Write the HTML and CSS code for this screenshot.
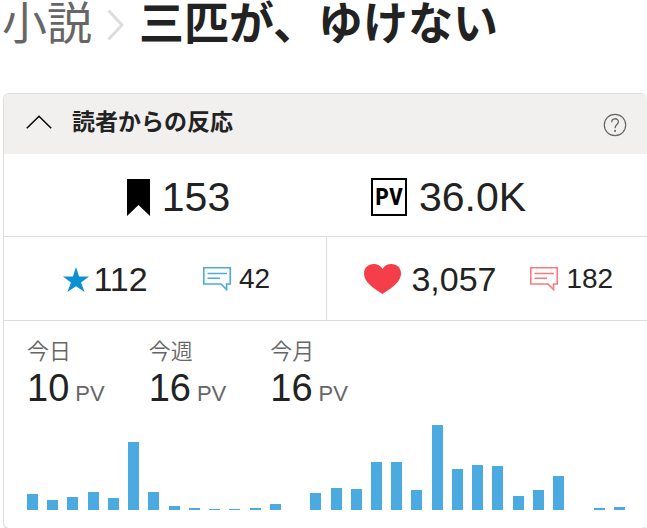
FILE: index.html
```html
<!DOCTYPE html>
<html lang="ja">
<head>
    <meta charset="UTF-8">
    <meta name="viewport" content="width=device-width, initial-scale=1.0">
    <title>三匹が、ゆけない</title>
    <link rel="stylesheet" href="styles.css">
</head>
<body>
    <header class="breadcrumb">
        <a class="breadcrumb-link" href="#">小説</a>
        <svg class="breadcrumb-arrow" width="17" height="32" viewBox="0 0 17 32" aria-hidden="true">
            <path d="M1.5 1.5 L15 16 L1.5 30.5" fill="none" stroke="#ddd" stroke-width="3"/>
        </svg>
        <h1 class="breadcrumb-title">三匹が、ゆけない</h1>
    </header>

    <section class="card">
        <div class="card-header">
            <button class="toggle" type="button" aria-expanded="true">
                <svg width="26" height="14" viewBox="0 0 26 14" aria-hidden="true">
                    <path d="M0.8 13.2 L13 1.2 L25.2 13.2" fill="none" stroke="#000" stroke-width="1.5"/>
                </svg>
                <span>読者からの反応</span>
            </button>
            <button class="help" type="button" aria-label="ヘルプ">
                <svg width="24" height="24" viewBox="0 0 24 24" aria-hidden="true">
                    <circle cx="12" cy="12" r="10.7" fill="none" stroke="#666" stroke-width="1.2"/>
                    <path d="M8.7 9.2 C8.7 4.7 15.4 4.7 15.4 8.8 C15.4 11.6 12.1 11.6 12.1 15.2" fill="none" stroke="#666" stroke-width="1.3"/>
                    <rect x="11.2" y="17" width="1.8" height="1.8" fill="#666"/>
                </svg>
            </button>
        </div>

        <div class="totals">
            <div class="stat stat-large">
                <svg width="23" height="37" viewBox="0 0 23 37" aria-hidden="true">
                    <path d="M0 0 H23 V37 L11.5 26 L0 37 Z" fill="#000"/>
                </svg>
                <span>153</span>
            </div>
            <div class="stat stat-large">
                <span class="pv-icon">PV</span>
                <span>36.0K</span>
            </div>
        </div>

        <div class="reactions">
            <div class="reaction">
                <div class="stat stat-medium stat-star">
                    <svg width="26" height="25" viewBox="0 0 26 25" aria-hidden="true">
                        <path d="M13 0 L16.1 9.5 H26 L18 15.4 L21.6 25 L13 19.3 L4.4 25 L8 15.4 L0 9.5 H9.9 Z" fill="#0b90d1"/>
                    </svg>
                    <span>112</span>
                </div>
                <div class="stat stat-small">
                    <svg width="28" height="24" viewBox="0 0 28 24" fill="none" stroke="#4baae0" stroke-width="1.6" aria-hidden="true">
                        <path d="M0.8 0.8 H27.2 V17 H23.6 V22.6 L18 17 H0.8 Z"/>
                        <path d="M4.5 6.5 H24 M4.5 11.2 H17"/>
                    </svg>
                    <span>42</span>
                </div>
            </div>
            <div class="reaction">
                <div class="stat stat-medium">
                    <svg width="37" height="30" viewBox="0 0 37 30" aria-hidden="true">
                        <path d="M18.5 30 C13 26 0 19.5 0 9.5 C0 3.5 4.5 0 9.5 0 C13.5 0 16.8 1.7 18.5 5 C20.2 1.7 23.5 0 27.5 0 C32.5 0 37 3.5 37 9.5 C37 19.5 24 26 18.5 30 Z" fill="#f43f4b"/>
                    </svg>
                    <span>3,057</span>
                </div>
                <div class="stat stat-small">
                    <svg width="28" height="24" viewBox="0 0 28 24" fill="none" stroke="#f87b80" stroke-width="1.6" aria-hidden="true">
                        <path d="M0.8 0.8 H27.2 V17 H23.6 V22.6 L18 17 H0.8 Z"/>
                        <path d="M4.5 6.5 H24 M4.5 11.2 H17"/>
                    </svg>
                    <span>182</span>
                </div>
            </div>
        </div>

        <div class="access">
            <dl class="periods">
                <div>
                    <dt>今日</dt>
                    <dd><span>10</span><small>PV</small></dd>
                </div>
                <div>
                    <dt>今週</dt>
                    <dd><span>16</span><small>PV</small></dd>
                </div>
                <div>
                    <dt>今月</dt>
                    <dd><span>16</span><small>PV</small></dd>
                </div>
            </dl>
            <div class="chart" id="chart"></div>
        </div>
    </section>

    <script src="chart.js"></script>
</body>
</html>
```
FILE: styles.css
```css
* {
    box-sizing: border-box;
}
body {
    margin: 0;
    background: #fff;
    color: #222;
    font-family: "Liberation Sans", "Noto Sans CJK JP", sans-serif;
    overflow-x: hidden;
}
svg {
    display: block;
    flex: none;
}
button {
    padding: 0;
    border: none;
    background: transparent;
    color: inherit;
    font-family: inherit;
    cursor: pointer;
}

/* パンくず */
.breadcrumb {
    display: flex;
    align-items: center;
    gap: 15px;
    padding-left: 2px;
    margin-bottom: 43px;
    font-size: 45px;
    line-height: 50px;
    white-space: nowrap;
}
.breadcrumb-link {
    color: #666;
    text-decoration: none;
}
.breadcrumb-title {
    margin: 0;
    font-size: 45px;
    font-weight: 700;
}

.card {
    margin-left: 3px;
    border: 1px solid #ddd;
    border-right: none;
    border-radius: 6px;
    overflow: hidden;
}
.card-header {
    display: flex;
    align-items: center;
    justify-content: space-between;
    height: 60px;
    padding: 2px 20px 0 22px;
    background: #f1f0ef;
}
.toggle {
    display: flex;
    align-items: center;
    gap: 20px;
    padding-bottom: 6px;
    font-size: 23px;
    font-weight: 700;
    line-height: 28px;
}

.stat {
    display: flex;
    align-items: center;
    gap: 12px;
}
.stat-large {
    font-size: 41px;
    line-height: 46px;
}
.stat-medium {
    gap: 10px;
    font-size: 34px;
    line-height: 40px;
}
.stat-star {
    gap: 4px;
}
.stat-small {
    gap: 8px;
    font-size: 28px;
    line-height: 32px;
}
.totals {
    display: flex;
    align-items: center;
    justify-content: space-evenly;
    gap: 20px;
    padding: 20px 0 16px 2px;
    border-bottom: 1px solid #ddd;
}
.pv-icon {
    width: 36px;
    height: 38px;
    border: 2px solid #000;
    color: #000;
    font-family: "Roboto Condensed", "Open Sans Condensed", "DejaVu Sans Condensed", sans-serif;
    font-size: 24px;
    font-weight: 700;
    line-height: 34px;
    text-align: center;
}

.reactions {
    display: grid;
    grid-template-columns: 1fr 1fr;
    border-bottom: 1px solid #ddd;
}
.reaction {
    display: flex;
    align-items: center;
    justify-content: space-evenly;
    padding: 22px 0 21px 4px;
}
.reaction + .reaction {
    border-left: 1px solid #ddd;
}

.access {
    padding: 16px 22px 18px 23px;
}
.periods {
    display: flex;
    gap: 44px;
    margin: 0 0 10px;
}
.periods dt {
    color: #666;
    font-size: 22px;
    font-weight: 350;
    line-height: 30px;
}
.periods dd {
    display: flex;
    align-items: baseline;
    gap: 6px;
    margin: 0;
    font-size: 38px;
    line-height: 42px;
}
.periods small {
    color: #666;
    font-size: 22px;
}
.chart {
    display: flex;
    align-items: flex-end;
    justify-content: space-between;
    height: 85px;
}
.bar {
    width: 11px;
    background: #4baae0;
}
```
FILE: chart.js
```js
var views = [16, 10, 13, 18, 12, 68, 18, 4, 2, 1, 1, 2, 6, 0, 17, 22, 21, 48, 48, 20, 85, 41, 45, 44, 14, 20, 34, 0, 2, 3];
var chart = document.getElementById('chart');

for(var i = 0; i < views.length; i++){
    var bar = document.createElement('div');
    bar.className = 'bar';
    bar.style.height = views[i] + 'px';
    chart.appendChild(bar);
}
```
